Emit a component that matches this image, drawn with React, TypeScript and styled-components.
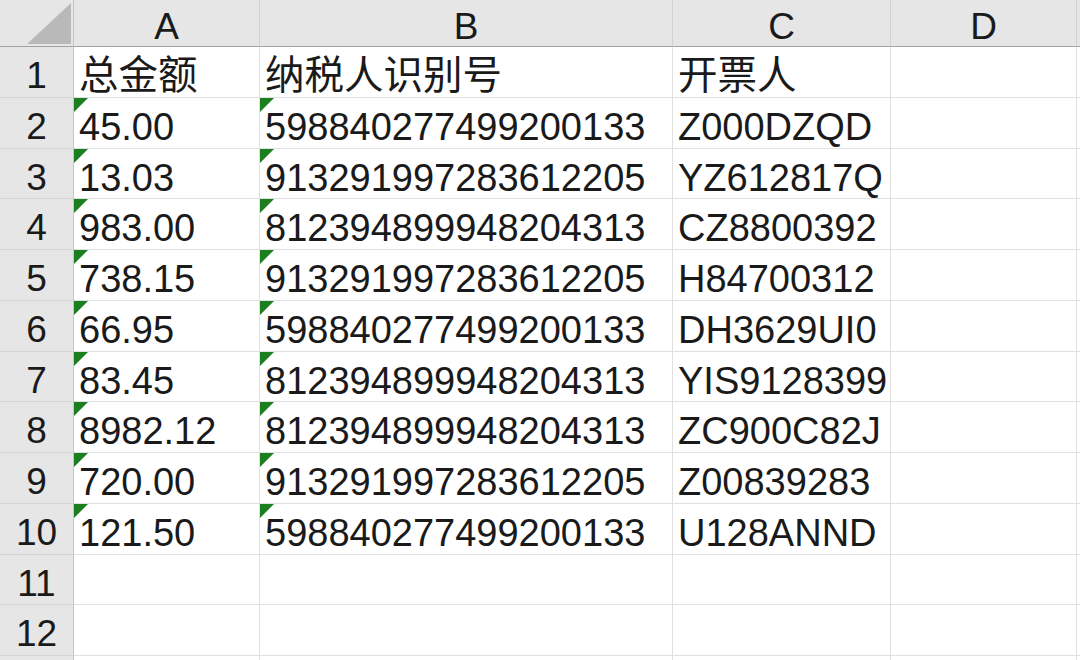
import React from "react";
import styled, { createGlobalStyle, css } from "styled-components";

const Global = createGlobalStyle`
  html, body { margin: 0; padding: 0; background: #ffffff; overflow: hidden; }
  body { width: 1080px; height: 660px; }
`;

const Sheet = styled.div`
  display: grid;
  grid-template-columns: 74px 186px 413px 218px 186px 1fr;
  grid-template-rows: 47px;
  grid-auto-rows: 50.75px;
  width: 1080px;
  height: 660px;
  overflow: hidden;
  font-family: "Liberation Sans", "Noto Sans CJK SC", sans-serif;
  color: #1a1a1a;
`;

const Corner = styled.div`
  position: relative;
  background: #e6e6e6;
  border-right: 1px solid #c6c6c6;
  border-bottom: 1px solid #a3a3a3;
  box-sizing: border-box;
  &::after {
    content: "";
    position: absolute;
    left: 27px;
    top: 3px;
    width: 44px;
    height: 41px;
    background: #b9b9b9;
    clip-path: polygon(100% 0, 100% 100%, 0 100%);
  }
`;

const ColHead = styled.div`
  background: #e6e6e6;
  border-right: 1px solid #d2d2d2;
  border-bottom: 1px solid #a3a3a3;
  box-sizing: border-box;
  display: flex;
  justify-content: center;
  padding-top: 8px;
  font-size: 37px;
  line-height: 1;
`;

const RowHead = styled.div`
  background: #e6e6e6;
  border-right: 1px solid #c6c6c6;
  border-bottom: 1px solid #d4d4d4;
  box-sizing: border-box;
  display: flex;
  justify-content: center;
  padding-top: 10px;
  font-size: 37px;
  line-height: 1;
`;

const Cell = styled.div<{ $flag?: boolean; $cjk?: boolean }>`
  position: relative;
  background: #ffffff;
  border-right: 1px solid #e0e0e0;
  border-bottom: 1px solid #e0e0e0;
  box-sizing: border-box;
  padding: ${(p) => (p.$cjk ? "9px 0 0 5px" : "10px 0 0 5px")};
  font-size: ${(p) => (p.$cjk ? "39.5px" : "38px")};
  line-height: 1;
  white-space: nowrap;
  overflow: visible;
  ${(p) =>
    p.$flag &&
    css`
      &::before {
        content: "";
        position: absolute;
        left: 0;
        top: 0;
        width: 0;
        height: 0;
        border-top: 14px solid #1b7f1f;
        border-right: 14px solid transparent;
      }
    `}
`;

const columns = ["A", "B", "C", "D", ""];

const header = ["总金额", "纳税人识别号", "开票人"];

const data: string[][] = [
  ["45.00", "598840277499200133", "Z000DZQD"],
  ["13.03", "913291997283612205", "YZ612817Q"],
  ["983.00", "812394899948204313", "CZ8800392"],
  ["738.15", "913291997283612205", "H84700312"],
  ["66.95", "598840277499200133", "DH3629UI0"],
  ["83.45", "812394899948204313", "YIS9128399"],
  ["8982.12", "812394899948204313", "ZC900C82J"],
  ["720.00", "913291997283612205", "Z00839283"],
  ["121.50", "598840277499200133", "U128ANND"],
];

type Row = { label: string; values: string[]; flags: boolean[]; cjk?: boolean };

const empty = ["", "", "", "", ""];
const noFlags = [false, false, false, false, false];

export default function App() {
  const rows: Row[] = [
    { label: "1", values: [...header, "", ""], flags: noFlags, cjk: true },
    ...data.map((r, i) => ({
      label: String(i + 2),
      values: [...r, "", ""],
      flags: [true, true, false, false, false],
    })),
    { label: "11", values: empty, flags: noFlags },
    { label: "12", values: empty, flags: noFlags },
    { label: "", values: empty, flags: noFlags },
  ];
  return (
    <>
      <Global />
      <Sheet>
        <Corner />
        {columns.map((c, i) => (
          <ColHead key={i}>{c}</ColHead>
        ))}
        {rows.map((r, ri) => (
          <React.Fragment key={ri}>
            <RowHead>{r.label}</RowHead>
            {r.values.map((v, ci) => (
              <Cell key={ci} $flag={r.flags[ci]} $cjk={r.cjk}>
                {v}
              </Cell>
            ))}
          </React.Fragment>
        ))}
      </Sheet>
    </>
  );
}
